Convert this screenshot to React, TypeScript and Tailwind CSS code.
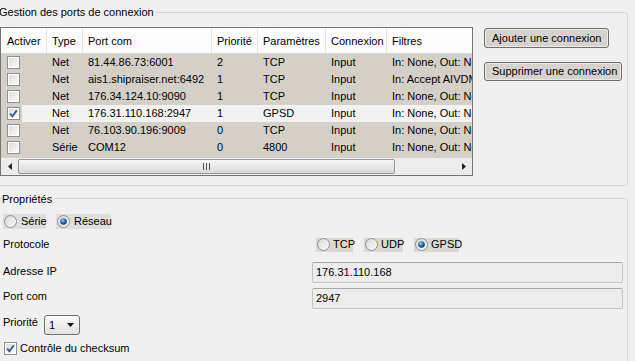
import React from "react";

type Row = { c: boolean; t: string; p: string; pr: string; pa: string; co: string; f: string; sel?: boolean };

const rows: Row[] = [
  { c: false, t: "Net", p: "81.44.86.73:6001", pr: "2", pa: "TCP", co: "Input", f: "In: None, Out: None" },
  { c: false, t: "Net", p: "ais1.shipraiser.net:6492", pr: "1", pa: "TCP", co: "Input", f: "In: Accept AIVDM" },
  { c: false, t: "Net", p: "176.34.124.10:9090", pr: "1", pa: "TCP", co: "Input", f: "In: None, Out: None" },
  { c: true, t: "Net", p: "176.31.110.168:2947", pr: "1", pa: "GPSD", co: "Input", f: "In: None, Out: None", sel: true },
  { c: false, t: "Net", p: "76.103.90.196:9009", pr: "0", pa: "TCP", co: "Input", f: "In: None, Out: None" },
  { c: false, t: "Série", p: "COM12", pr: "0", pa: "4800", co: "Input", f: "In: None, Out: None" },
];

function Check({ on }: { on: boolean }) {
  return (
    <div className="w-[13px] h-[13px] border border-[#8e8f8f] bg-white p-[1px] shrink-0">
      <div className="relative w-full h-full bg-gradient-to-br from-[#dcdcdc] to-[#fbfbfb]">
        {on && (
          <svg className="absolute inset-0" width="9" height="9" viewBox="0 0 9 9">
            <path d="M1.2 4.6 L3.4 7.2 L7.8 1.4" fill="none" stroke="#3a57a0" strokeWidth="1.8" />
          </svg>
        )}
      </div>
    </div>
  );
}

function Radio({ on }: { on: boolean }) {
  return (
    <svg width="13" height="13" viewBox="0 0 13 13" className="shrink-0">
      <defs>
        <linearGradient id="rbg" x1="0" y1="0" x2="1" y2="1">
          <stop offset="0" stopColor="#d8d8d8" />
          <stop offset="1" stopColor="#fafafa" />
        </linearGradient>
        <radialGradient id="rdot" cx="0.4" cy="0.35" r="0.7">
          <stop offset="0" stopColor="#9fd3ff" />
          <stop offset="0.5" stopColor="#2d6bb5" />
          <stop offset="1" stopColor="#0f2f66" />
        </radialGradient>
      </defs>
      <circle cx="6.5" cy="6.5" r="6" fill="url(#rbg)" stroke="#8e8f8f" />
      {on && <circle cx="6.5" cy="6.5" r="3.3" fill="url(#rdot)" />}
    </svg>
  );
}

const cols = "grid grid-cols-[46px_36px_129px_46px_68px_61px_140px]";

export default function App() {
  return (
    <div className="w-[635px] h-[361px] overflow-hidden bg-[#f0f0f0] text-[11px] leading-[13px] text-black font-['Liberation_Sans',Arial,sans-serif] flex flex-col">
      {/* Top group */}
      <div className="relative mt-[12px] ml-[-8px] w-[636px] h-[174px] shrink-0 border border-[#d3d8dc] rounded-[3px] pl-[7px] pt-[14px] flex">
        <span className="absolute left-[6px] top-[-7px] bg-[#f0f0f0] pr-[2px] leading-[13px]">Gestion des ports de connexion</span>
        <div className="w-[473px] h-[149px] border border-[#747474] flex flex-col overflow-hidden bg-[#d4d0c8]">
          <div className={`${cols} h-[26px] shrink-0 bg-[#fcfcfc] border-b border-[#d5d5d5]`}>
            {["Activer", "Type", "Port com", "Priorité", "Paramètres", "Connexion", "Filtres"].map((h, i) => (
              <div key={h} className={`flex items-center pt-[1px] ${i === 0 ? "pl-[6px]" : "pl-[5px]"} ${i < 6 ? "border-r border-[#e3e3e3]" : ""} whitespace-nowrap`}>
                {h}
              </div>
            ))}
          </div>
          {rows.map((r, i) => (
            <div key={i} className={`${cols} h-[17px] shrink-0 items-center whitespace-nowrap ${r.sel ? "bg-[linear-gradient(to_right,#d4d0c8_21px,#f2f2f2_21px)]" : ""}`}>
              <div className="pl-[6px] flex items-center"><Check on={r.c} /></div>
              <div className="pl-[5px]">{r.t}</div>
              <div className="pl-[5px]">{r.p}</div>
              <div className="pl-[5px]">{r.pr}</div>
              <div className="pl-[5px]">{r.pa}</div>
              <div className="pl-[5px]">{r.co}</div>
              <div className="pl-[5px]">{r.f}</div>
            </div>
          ))}
          <div className="flex-1" />
          {/* Scrollbar */}
          <div className="h-[17px] shrink-0 bg-[#ececec] flex items-center">
            <div className="w-[17px] h-full flex items-center justify-center">
              <svg width="4" height="7" viewBox="0 0 4 7"><path d="M4 0 L0 3.5 L4 7 Z" fill="#222" /></svg>
            </div>
            <div className="w-[377px] h-[15px] rounded-[2px] border border-[#979797] bg-gradient-to-b from-[#f7f7f7] to-[#d8d8d8] flex items-center justify-center">
              <svg width="7" height="7" viewBox="0 0 7 7">
                <path d="M0.5 0 V7 M3.5 0 V7 M6.5 0 V7" stroke="#555" strokeWidth="1" />
              </svg>
            </div>
            <div className="flex-1" />
            <div className="w-[17px] h-full flex items-center justify-center">
              <svg width="4" height="7" viewBox="0 0 4 7"><path d="M0 0 L4 3.5 L0 7 Z" fill="#222" /></svg>
            </div>
          </div>
        </div>
        <div className="ml-[11px] pt-[1px] flex flex-col items-start gap-[14px]">
          <button className="h-[20px] px-[6px] border border-[#6f6f6f] rounded-[3px] bg-[#d6d3ce] shadow-[inset_0_0_0_1px_#eceae6] whitespace-nowrap leading-[13px] w-[125px] text-left pl-[7px]">Ajouter une connexion</button>
          <button className="h-[19px] px-[6px] border border-[#6f6f6f] rounded-[3px] bg-[#d6d3ce] shadow-[inset_0_0_0_1px_#eceae6] whitespace-nowrap leading-[13px] w-[138px] text-left pl-[7px]">Supprimer une connexion</button>
        </div>
      </div>

      {/* Properties group */}
      <div className="relative mt-[12px] ml-[-8px] w-[636px] h-[200px] shrink-0 border border-[#d3d8dc] rounded-[3px] pl-[10px] pt-[14px] flex flex-col">
        <span className="absolute left-[9px] top-[-6px] bg-[#f0f0f0] pr-[2px] leading-[13px]">Propriétés</span>
        <div className="h-[16px] flex items-center gap-[10px]">
          <div className="h-[15px] w-[43px] bg-[#dedede] flex items-center pl-[1px] gap-[4px]"><Radio on={false} />Série</div>
          <div className="h-[15px] w-[55px] bg-[#dedede] flex items-center pl-[1px] gap-[4px]"><Radio on={true} />Réseau</div>
        </div>
        <div className="mt-[8px] h-[15px] flex items-center">
          <div className="w-[309px]">Protocole</div>
          <div className="ml-[4px] flex items-center gap-[11px]">
            <div className="h-[14px] w-[37px] bg-[#dbd8d2] flex items-center pl-[1px] gap-[3px]"><Radio on={false} />TCP</div>
            <div className="h-[14px] w-[39px] bg-[#dbd8d2] flex items-center pl-[1px] gap-[3px]"><Radio on={false} />UDP</div>
            <div className="h-[14px] w-[45px] bg-[#dbd8d2] flex items-center pl-[1px] gap-[3px]"><Radio on={true} />GPSD</div>
          </div>
        </div>
        <div className="mt-[10px] h-[21px] flex items-start">
          <div className="w-[309px] pt-[2px] leading-[14px]">Adresse IP</div>
          <div className="w-[311px] h-[21px] border border-[#c3c3c3] border-t-[#a8a8a8] rounded-[2px] bg-[#ececec] flex items-center pl-[3px]">176.31.110.168</div>
        </div>
        <div className="mt-[5px] h-[21px] flex items-start">
          <div className="w-[309px] pt-[1px] leading-[14px]">Port com</div>
          <div className="w-[311px] h-[21px] border border-[#c3c3c3] border-t-[#a8a8a8] rounded-[2px] bg-[#ececec] flex items-center pl-[3px]">2947</div>
        </div>
        <div className="mt-[6px] h-[20px] flex items-start">
          <div className="w-[41px] leading-[14px]">Priorité</div>
          <div className="w-[36px] h-[20px] border border-[#6f6f6f] rounded-[3px] bg-gradient-to-b from-[#fbfbfb] to-[#e2e2e2] flex items-center pl-[4px] pr-[5px] justify-between">
            <span>1</span>
            <svg width="7" height="4" viewBox="0 0 7 4"><path d="M0 0 H7 L3.5 4 Z" fill="#111" /></svg>
          </div>
        </div>
        <div className="mt-[7px] h-[13px] flex items-center gap-[3px] pl-[1px]">
          <Check on={true} />
          <span>Contrôle du checksum</span>
        </div>
      </div>
    </div>
  );
}
